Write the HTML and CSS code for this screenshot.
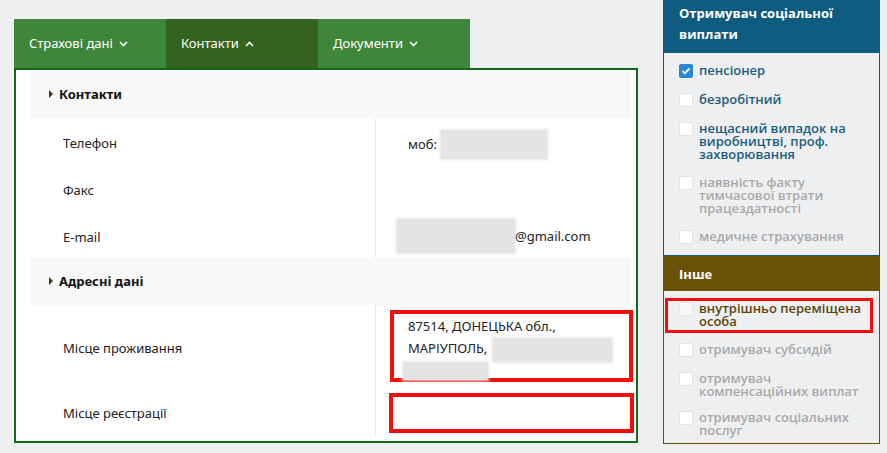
FILE: index.html
```html
<!DOCTYPE html>
<html lang="uk">
<head>
  <meta charset="UTF-8">
  <title>Контакти</title>
  <link rel="stylesheet" href="styles.css">
</head>
<body>
  <div class="page">
    <main class="main">
      <nav class="tabs">
        <div class="tab">Страхові дані
          <svg class="chev" width="9" height="6" viewBox="0 0 9 6"><path d="M1 1l3.5 3.5L8 1" fill="none" stroke="#fff" stroke-width="1.6"/></svg>
        </div>
        <div class="tab active">Контакти
          <svg class="chev" width="9" height="6" viewBox="0 0 9 6"><path d="M1 5l3.5-3.5L8 5" fill="none" stroke="#fff" stroke-width="1.6"/></svg>
        </div>
        <div class="tab">Документи
          <svg class="chev" width="9" height="6" viewBox="0 0 9 6"><path d="M1 1l3.5 3.5L8 1" fill="none" stroke="#fff" stroke-width="1.6"/></svg>
        </div>
      </nav>

      <div class="card">
        <div class="section-head"><span class="arrow"></span>Контакти</div>
        <div class="row row-phone">
          <div class="label">Телефон</div>
          <div class="value value-phone">моб: <span class="blur blur-phone"></span></div>
        </div>
        <div class="row row-fax">
          <div class="label">Факс</div>
          <div class="value"></div>
        </div>
        <div class="row row-mail">
          <div class="label">E-mail</div>
          <div class="value value-mail"><span class="blur blur-mail"></span>@gmail.com</div>
        </div>

        <div class="section-head"><span class="arrow"></span>Адресні дані</div>
        <div class="row row-live">
          <div class="label">Місце проживання</div>
          <div class="value value-box">
            <div class="mark mark-live">
              87514, ДОНЕЦЬКА обл.,<br>
              МАРІУПОЛЬ, <span class="blur blur-street"></span><br>
              <span class="blur blur-house"></span>
            </div>
          </div>
        </div>
        <div class="row row-reg">
          <div class="label">Місце реєстрації</div>
          <div class="value value-box">
            <div class="mark mark-reg"></div>
          </div>
        </div>
      </div>
    </main>

    <aside class="side">
      <div class="panel-head blue">Отримувач соціальної виплати</div>
      <ul class="checks checks-blue">
        <li class="check"><span class="box checked"><svg width="10" height="8" viewBox="0 0 10 8"><path d="M1.5 4l2.3 2.3L8.5 1.5" fill="none" stroke="#fff" stroke-width="1.8"/></svg></span>пенсіонер</li>
        <li class="check"><span class="box"></span>безробітний</li>
        <li class="check"><span class="box"></span>нещасний випадок на виробництві, проф. захворювання</li>
        <li class="check off"><span class="box"></span>наявність факту тимчасової втрати працездатності</li>
        <li class="check off"><span class="box"></span>медичне страхування</li>
      </ul>

      <div class="panel-head brown">Інше</div>
      <ul class="checks checks-brown">
        <li class="check marked"><span class="box"></span>внутрішньо переміщена особа</li>
        <li class="check off"><span class="box"></span>отримувач субсидій</li>
        <li class="check off"><span class="box"></span>отримувач компенсаційних виплат</li>
        <li class="check off"><span class="box"></span>отримувач соціальних послуг</li>
      </ul>
    </aside>
  </div>
</body>
</html>
```

FILE: styles.css
```css
* {
  box-sizing: border-box;
}
body {
  margin: 0;
  background: #eeeff1;
  font-family: 'Noto Sans', sans-serif;
  color: #222;
}
.page {
  display: flex;
  align-items: flex-start;
}

/* left part */
.main {
  width: 624px;
  margin-left: 14px;
  padding-top: 19px;
}
.tabs {
  display: flex;
  width: 456px;
  height: 49px;
  background: #3d863a;
}
.tab {
  width: 152px;
  display: flex;
  align-items: center;
  padding-left: 15px;
  padding-bottom: 1px;
  color: #fff;
  font-size: 13px;
}
.tab.active {
  background: #33631e;
}
.chev {
  margin-left: 6px;
  margin-top: 1px;
}
.card {
  height: 375px;
  border: 2px solid #0f6a1a;
  background: #fff;
  padding: 1px 5px 0 14px;
}
.section-head {
  height: 47px;
  display: flex;
  align-items: center;
  padding-left: 19px;
  padding-bottom: 1px;
  background: #f8f8f8;
  font-size: 13px;
  font-weight: bold;
  color: #111;
}
.arrow {
  width: 0;
  height: 0;
  border-top: 4px solid transparent;
  border-bottom: 4px solid transparent;
  border-left: 4px solid #3a3a12;
  margin-right: 6px;
}
.row {
  display: flex;
}
.row-phone { height: 50px; }
.row-fax { height: 44px; }
.row-mail { height: 46px; }
.row-live { height: 85px; }
.row-reg { height: 46px; }
.label {
  flex: none;
  width: 345px;
  display: flex;
  align-items: center;
  padding-left: 33px;
  font-size: 13px;
}
.row-mail .label {
  padding-top: 4px;
}
.value {
  flex: 1;
  min-width: 0;
  display: flex;
  align-items: center;
  border-left: 1px solid #ececec;
  padding-left: 32px;
  font-size: 13px;
}
.value-phone {
  padding-top: 2px;
}
.value-mail {
  padding-left: 21px;
  padding-top: 2px;
}
.blur {
  display: inline-block;
  background: #e4e4e4;
  box-shadow: 0 0 3px 1px #e8e8e8;
  vertical-align: middle;
}
.blur-phone {
  width: 106px;
  height: 29px;
  margin-left: 4px;
}
.blur-mail {
  width: 118px;
  height: 34px;
}
.value-box {
  align-items: flex-start;
  padding-left: 14px;
}
.mark {
  flex: none;
  width: 243px;
  border: 4px solid #f50d0d;
}
.mark-live {
  margin-top: 5px;
  height: 72px;
  padding: 1px 0 0 14px;
  line-height: 22px;
}
.mark-reg {
  margin-top: 3px;
  height: 40px;
  margin-left: -1px;
  width: 245px;
}
.blur-street {
  width: 119px;
  height: 24px;
  margin-left: 2px;
}
.blur-house {
  width: 85px;
  height: 18px;
  margin-left: -5px;
  vertical-align: top;
}

/* right part */
.side {
  width: 217px;
  margin-left: 25px;
  font-family: 'Open Sans', sans-serif;
}
.panel-head {
  color: #fff;
  font-weight: bold;
  font-size: 13px;
  padding-left: 16px;
}
.panel-head.blue {
  background: #0e5b80;
  height: 53px;
  padding-top: 3px;
  line-height: 21px;
  padding-right: 20px;
}
.panel-head.brown {
  background: #6b5107;
  height: 35px;
  line-height: 36px;
}
.checks {
  list-style: none;
  margin: 0;
  border: 1px solid #0e5b80;
  border-top: none;
  display: flex;
  flex-direction: column;
}
.checks-blue {
  padding: 11px 10px 11px 15px;
  gap: 15px;
}
.checks-brown {
  border-color: #6b5107;
  height: 153px;
  padding: 7px 6px 0 1px;
}
.check {
  display: flex;
  align-items: flex-start;
  font-size: 13px;
  font-weight: 600;
  line-height: 13px;
  color: #1b5d7e;
}
.check.off {
  color: #a9a9a9;
}
.box {
  flex: none;
  width: 14px;
  height: 14px;
  margin-right: 6px;
  background: #fff;
  border: 1px solid #e2e2e2;
  border-radius: 2px;
  display: flex;
  align-items: center;
  justify-content: center;
}
.box.checked {
  background: #2a87d6;
  border-color: #2a87d6;
}
.checks-brown .check {
  padding-left: 14px;
}
.check.marked {
  border: 3px solid #f50d0d;
  padding: 1px 4px 1px 11px;
  height: 35px;
  color: #5c4509;
}
.check.marked .box {
  opacity: 0.6;
}
.checks-brown .check:nth-child(2) {
  margin-top: 10px;
}
.checks-brown .check:nth-child(3) {
  margin-top: 15px;
}
.checks-brown .check:nth-child(4) {
  margin-top: 13px;
}
```
